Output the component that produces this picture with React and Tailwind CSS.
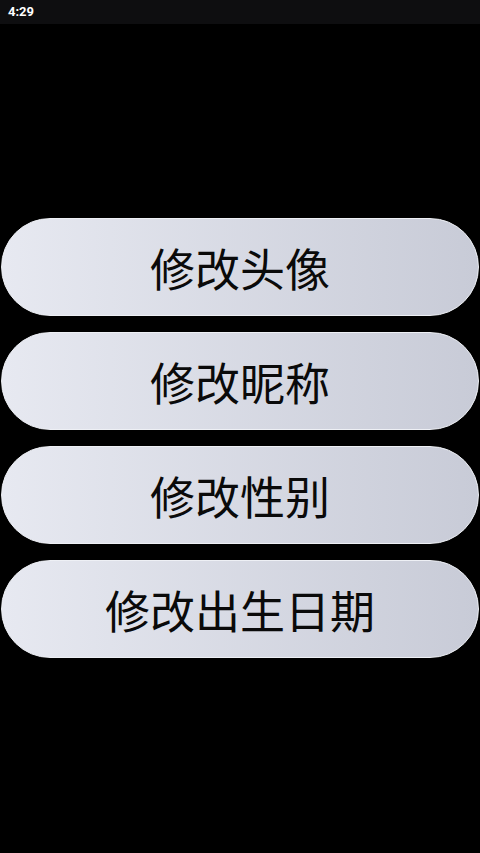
const items = ['修改头像', '修改昵称', '修改性别', '修改出生日期'];

export default function App() {
  return (
    <div className="w-[480px] h-[853px] bg-black flex flex-col overflow-hidden">
      {/* status bar */}
      <div className="h-6 bg-[#0e0e10] flex items-center px-2">
        <span className="text-white text-[13px] font-bold font-['Roboto',sans-serif]">4:29</span>
      </div>

      <div className="flex flex-col gap-4 px-px pt-[194px]">
        {items.map((label) => (
          <button
            key={label}
            type="button"
            className="h-[98px] w-full rounded-full border border-[#eef0f5] bg-gradient-to-r from-[#e7e9f1] to-[#c8cbd7] flex items-center justify-center"
          >
            <span className="text-[45px] leading-none text-[#0a0a0a] font-['Noto_Sans_CJK_SC',sans-serif]">{label}</span>
          </button>
        ))}
      </div>
    </div>
  );
}
